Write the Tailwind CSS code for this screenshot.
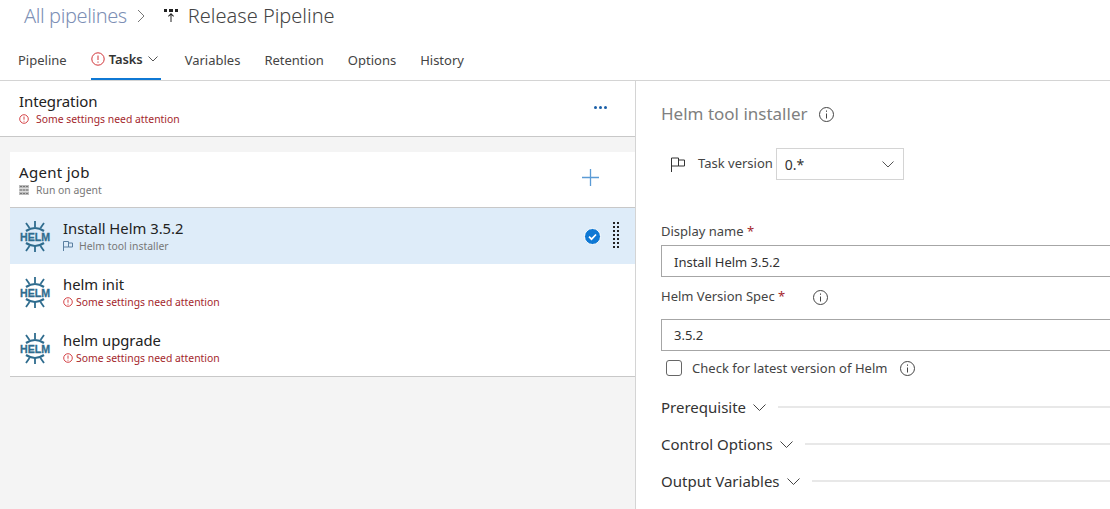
<!DOCTYPE html>
<html lang="en">
<head>
  <meta charset="UTF-8">
  <title>Release Pipeline</title>
  <script src="https://cdn.jsdelivr.net/npm/@tailwindcss/browser@4"></script>
</head>
<body class="w-[1110px] h-[509px] overflow-hidden bg-white font-['Noto_Sans',sans-serif] text-[#333]">
  <!-- Breadcrumb -->
  <div class="h-[32px] pl-6 flex items-center text-[20px]">
    <span class="text-[#7d8fb5] font-light tracking-[-0.4px]">All pipelines</span>
    <svg class="ml-[10px] w-[9px] h-[14px]" viewBox="0 0 9 14" fill="none" stroke="#777" stroke-width="1"><path d="M1 1l6 6-6 6"/></svg>
    <svg class="ml-[17px] w-[16px] h-[16px]" viewBox="0 0 16 16" fill="#222"><path d="M1 1h3v3H1zM6 1h4v3H6zM12 1h3v3h-3z"/><path d="M8 5l3 3-.7.7L8.500 7v7h-1V7L5.700 8.700 5 8z"/></svg>
    <span class="ml-[9px] text-[#444] font-light">Release Pipeline</span>
  </div>

  <!-- Tabs -->
  <div class="h-[49px] pl-[18px] flex items-start border-b border-[#d4d4d4] text-[13px] text-[#444]">
    <div class="pt-[19px]">Pipeline</div>
    <div class="ml-[24px] w-[70px] h-[48px] border-b-2 border-[#0f78d4] pt-[18px] flex items-start font-semibold text-[#333]">
      <svg class="w-[14px] h-[14px] mt-[2px] mr-[4px]" viewBox="0 0 14 14" fill="none" stroke="#d13438"><circle cx="7" cy="7" r="6.200"/><path d="M7 3.500v4.500M7 9.500v1.200"/></svg>
      <span class="tracking-[-0.1px]">Tasks</span>
      <svg class="w-[10px] h-[6px] mt-[6px] ml-[5px]" viewBox="0 0 10 6" fill="none" stroke="#555"><path d="M.5.500l4.500 4.500L9.500.500"/></svg>
    </div>
    <div class="ml-[24px] pt-[19px]">Variables</div>
    <div class="ml-[24px] pt-[19px]">Retention</div>
    <div class="ml-[24px] pt-[19px]">Options</div>
    <div class="ml-[24px] pt-[19px]">History</div>
  </div>

  <div class="flex h-[428px]">
    <!-- Left column -->
    <div class="w-[636px] shrink-0 border-r border-[#d4d4d4] bg-[#f4f4f4]">
      <div class="h-[56px] bg-white border-b border-[#c8c8c8] pl-[19px] pr-[28px] pt-[10px] flex justify-between">
        <div>
          <div class="text-[15px] leading-[20px] text-[#222] tracking-[-0.1px]">Integration</div>
          <div class="flex items-center text-[10.400px] leading-[16px] text-[#a4262c]">
            <svg class="w-[10px] h-[10px] mr-[7px]" viewBox="0 0 14 14" fill="none" stroke="#d13438" stroke-width="1.300"><circle cx="7" cy="7" r="6"/><path d="M7 3.500v4.500M7 9.500v1.200"/></svg>
            Some settings need attention
          </div>
        </div>
        <div class="flex gap-[2px] mt-[15px]">
          <span class="w-[3px] h-[3px] rounded-full bg-[#1a5fa8]"></span>
          <span class="w-[3px] h-[3px] rounded-full bg-[#1a5fa8]"></span>
          <span class="w-[3px] h-[3px] rounded-full bg-[#1a5fa8]"></span>
        </div>
      </div>

      <div class="ml-[10px] mt-[15px] border-b border-[#c8c8c8] bg-white">
        <!-- Agent job -->
        <div class="h-[56px] pl-[9px] pr-[36px] pt-[10px] flex justify-between border-b border-[#c8c8c8]">
          <div>
            <div class="text-[15px] leading-[20px] text-[#222] tracking-[0.3px]">Agent job</div>
            <div class="flex items-center text-[10.400px] leading-[16px] text-[#777]">
              <svg class="w-[10px] h-[10px] mr-[7px]" viewBox="0 0 10 10" fill="#bbb"><path d="M0 0h10v3H0zM0 3.500h10v3H0zM0 7h10v3H0z"/><path d="M1 1.500h8M1 5h8M1 8.500h8" stroke="#666" stroke-width=".8" stroke-dasharray="2 1"/></svg>
              Run on agent
            </div>
          </div>
          <svg class="w-[17px] h-[17px] mt-[7px]" viewBox="0 0 17 17" fill="none" stroke="#5b9bd5" stroke-width="1.300"><path d="M0 8.500h17M8.500 0v17"/></svg>
        </div>

        <!-- Install Helm -->
        <div class="h-[56px] bg-[#deecf9] pl-[9px] pr-[15px] flex items-center">
          <svg class="w-[32px] h-[34px] shrink-0 overflow-visible" viewBox="0 0 32 34" fill="none" stroke="#2f6c8e" stroke-width="1.800">
            <path d="M7 12Q16 6 25 12" stroke-width="2.200"/><path d="M16 8V2M10.500 9L7 4M21.500 9L25 4"/>
            <path d="M7 24Q16 30 25 24" stroke-width="2.200"/><path d="M16 27v6M10.500 27L7 32M21.500 27L25 32"/>
            <text x="1" y="22" textLength="30" lengthAdjust="spacingAndGlyphs" font-family="Liberation Sans, sans-serif" font-weight="700" font-size="11.500" fill="#2f6c8e" stroke="#2f6c8e" stroke-width=".3">HELM</text>
          </svg>
          <div class="ml-[12px] flex-1">
            <div class="text-[14.800px] leading-[20px] text-[#222]">Install Helm 3.5.2</div>
            <div class="flex items-center text-[10.400px] leading-[16px] text-[#777]">
              <svg class="w-[10px] h-[10px] mr-[6px]" viewBox="0 0 10 10" fill="none" stroke="#5a7fa0"><path d="M.5 10V.500h5v1.500h4v4h-4V2M.5 6h5"/></svg>
              Helm tool installer
            </div>
          </div>
          <svg class="w-[17px] h-[17px] mr-[12px]" viewBox="0 0 17 17"><circle cx="8.500" cy="8.500" r="8" fill="#0f78d4" stroke="#fff"/><path d="M5 8.700l2.500 2.500L12 6.500" fill="none" stroke="#fff" stroke-width="1.700"/></svg>
          <svg class="w-[7px] h-[28px]" viewBox="0 0 7 28" fill="#222"><path d="M0 0h2v2H0zM4 0h2v2H4zM0 4h2v2H0zM4 4h2v2H4zM0 8h2v2H0zM4 8h2v2H4zM0 12h2v2H0zM4 12h2v2H4zM0 16h2v2H0zM4 16h2v2H4zM0 20h2v2H0zM4 20h2v2H4zM0 24h2v2H0zM4 24h2v2H4z"/></svg>
        </div>

        <!-- helm init -->
        <div class="h-[56px] pl-[9px] flex items-center">
          <svg class="w-[32px] h-[34px] shrink-0 overflow-visible" viewBox="0 0 32 34" fill="none" stroke="#2f6c8e" stroke-width="1.800">
            <path d="M7 12Q16 6 25 12" stroke-width="2.200"/><path d="M16 8V2M10.500 9L7 4M21.500 9L25 4"/>
            <path d="M7 24Q16 30 25 24" stroke-width="2.200"/><path d="M16 27v6M10.500 27L7 32M21.500 27L25 32"/>
            <text x="1" y="22" textLength="30" lengthAdjust="spacingAndGlyphs" font-family="Liberation Sans, sans-serif" font-weight="700" font-size="11.500" fill="#2f6c8e" stroke="#2f6c8e" stroke-width=".3">HELM</text>
          </svg>
          <div class="ml-[12px]">
            <div class="text-[14.800px] leading-[20px] text-[#222]">helm init</div>
            <div class="flex items-center text-[10.400px] leading-[16px] text-[#a4262c]">
              <svg class="w-[10px] h-[10px] mr-[3px]" viewBox="0 0 14 14" fill="none" stroke="#d13438" stroke-width="1.300"><circle cx="7" cy="7" r="6"/><path d="M7 3.500v4.500M7 9.500v1.200"/></svg>
              Some settings need attention
            </div>
          </div>
        </div>

        <!-- helm upgrade -->
        <div class="h-[56px] pl-[9px] flex items-center">
          <svg class="w-[32px] h-[34px] shrink-0 overflow-visible" viewBox="0 0 32 34" fill="none" stroke="#2f6c8e" stroke-width="1.800">
            <path d="M7 12Q16 6 25 12" stroke-width="2.200"/><path d="M16 8V2M10.500 9L7 4M21.500 9L25 4"/>
            <path d="M7 24Q16 30 25 24" stroke-width="2.200"/><path d="M16 27v6M10.500 27L7 32M21.500 27L25 32"/>
            <text x="1" y="22" textLength="30" lengthAdjust="spacingAndGlyphs" font-family="Liberation Sans, sans-serif" font-weight="700" font-size="11.500" fill="#2f6c8e" stroke="#2f6c8e" stroke-width=".3">HELM</text>
          </svg>
          <div class="ml-[12px]">
            <div class="text-[14.800px] leading-[20px] text-[#222]">helm upgrade</div>
            <div class="flex items-center text-[10.400px] leading-[16px] text-[#a4262c]">
              <svg class="w-[10px] h-[10px] mr-[3px]" viewBox="0 0 14 14" fill="none" stroke="#d13438" stroke-width="1.300"><circle cx="7" cy="7" r="6"/><path d="M7 3.500v4.500M7 9.500v1.200"/></svg>
              Some settings need attention
            </div>
          </div>
        </div>
      </div>
    </div>

    <!-- Right column -->
    <div class="flex-1 pl-[25px] min-w-0 overflow-hidden">
      <div class="mt-[21px] h-[24px] flex items-center text-[17px] text-[#808080]">
        Helm tool installer
        <svg class="ml-[11px] w-[15px] h-[15px]" viewBox="0 0 15 15" fill="none" stroke="#444"><circle cx="7.500" cy="7.500" r="7"/><path d="M7.500 6.500v5M7.500 3.500v1.300"/></svg>
      </div>

      <div class="mt-[22px] h-[32px] flex items-center text-[13px] text-[#444]">
        <svg class="ml-[10px] w-[14px] h-[15px]" viewBox="0 0 14 15" fill="none" stroke="#333"><path d="M.5 15V1h7v2h6v6h-6V3M.5 9h7"/></svg>
        <span class="ml-[13px]">Task version</span>
        <div class="ml-[3px] w-[128px] h-[32px] border border-[#d4d4d4] pl-[8px] pr-[9px] flex items-center justify-between text-[14px] text-[#333]">
          <span>0.*</span>
          <svg class="w-[12px] h-[7px]" viewBox="0 0 12 7" fill="none" stroke="#555"><path d="M.5.500L6 6l5.500-5.500"/></svg>
        </div>
      </div>

      <div class="mt-[42px] text-[13px] leading-[18px] text-[#444]">Display name <span class="text-[#a4262c]">*</span></div>
      <div class="mt-[5px] w-[480px] h-[32px] border border-[#a6a6a6] pl-[12px] pt-[3px] flex items-center text-[13px] text-[#333]">Install Helm 3.5.2</div>

      <div class="mt-[11px] h-[18px] flex items-center text-[13px] text-[#444]">
        <span>Helm Version Spec <span class="text-[#a4262c]">*</span></span>
        <svg class="ml-[28px] w-[15px] h-[15px]" viewBox="0 0 15 15" fill="none" stroke="#444"><circle cx="7.500" cy="7.500" r="7"/><path d="M7.500 6.500v5M7.500 3.500v1.300"/></svg>
      </div>
      <div class="mt-[13px] w-[480px] h-[32px] border border-[#a6a6a6] pl-[12px] pt-[2px] flex items-center text-[13px] text-[#333]">3.5.2</div>

      <div class="mt-[8px] h-[18px] flex items-center text-[13px] text-[#444]">
        <span class="ml-[5px] w-[16px] h-[16px] border border-[#666] rounded-[3px]"></span>
        <span class="ml-[10px] pt-[1px] tracking-[0.03px]">Check for latest version of Helm</span>
        <svg class="ml-[12px] w-[15px] h-[15px]" viewBox="0 0 15 15" fill="none" stroke="#444"><circle cx="7.500" cy="7.500" r="7"/><path d="M7.500 6.500v5M7.500 3.500v1.300"/></svg>
      </div>

      <div class="mt-[20px] h-[20px] flex items-center text-[15px] text-[#333]">
        <span>Prerequisite</span>
        <svg class="ml-[7px] w-[13px] h-[7px]" viewBox="0 0 13 7" fill="none" stroke="#444"><path d="M.5.500l6 6 6-6"/></svg>
        <div class="ml-[12px] flex-1 h-[2px] bg-[#e8e8e8]"></div>
      </div>
      <div class="mt-[17px] h-[20px] flex items-center text-[15px] text-[#333]">
        <span>Control Options</span>
        <svg class="ml-[7px] w-[13px] h-[7px]" viewBox="0 0 13 7" fill="none" stroke="#444"><path d="M.5.500l6 6 6-6"/></svg>
        <div class="ml-[12px] flex-1 h-[2px] bg-[#e8e8e8]"></div>
      </div>
      <div class="mt-[17px] h-[20px] flex items-center text-[15px] text-[#333]">
        <span>Output Variables</span>
        <svg class="ml-[7px] w-[13px] h-[7px]" viewBox="0 0 13 7" fill="none" stroke="#444"><path d="M.5.500l6 6 6-6"/></svg>
        <div class="ml-[12px] flex-1 h-[2px] bg-[#e8e8e8]"></div>
      </div>
    </div>
  </div>
</body>
</html>
